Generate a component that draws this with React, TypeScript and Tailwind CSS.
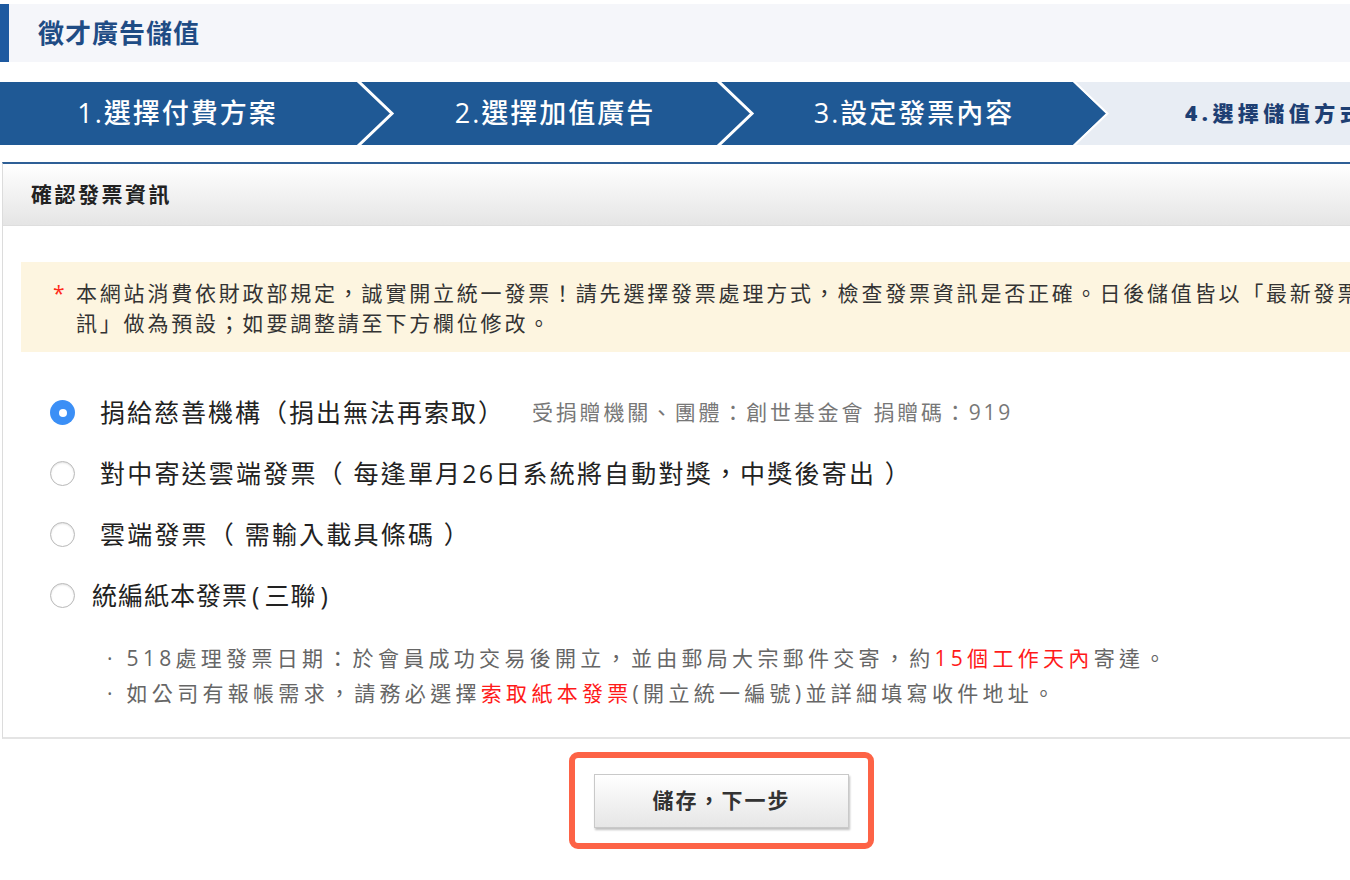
import React from "react";

const BLUE = "#1f5995";

function Chevron() {
  return (
    <svg width="40" height="63" viewBox="0 0 40 63" className="block shrink-0">
      <rect width="40" height="63" fill={BLUE} />
      <polyline points="2,-2 37,31.5 2,65" fill="none" stroke="#ffffff" strokeWidth="3" />
    </svg>
  );
}

function ArrowEnd() {
  return (
    <svg width="37" height="63" viewBox="0 0 37 63" className="block shrink-0">
      <rect width="37" height="63" fill="#e8edf4" />
      <polygon points="0,0 33,31.5 0,63" fill={BLUE} />
      <polyline points="0.5,-1 34.5,31.5 0.5,64" fill="none" stroke="#ffffff" strokeWidth="2" />
    </svg>
  );
}

function Radio({ checked }: { checked?: boolean }) {
  if (checked) {
    return (
      <span className="w-[25px] h-[25px] rounded-full bg-[#3b8ff6] flex items-center justify-center shrink-0">
        <span className="w-[8px] h-[8px] rounded-full bg-white" />
      </span>
    );
  }
  return (
    <span className="w-[25px] h-[25px] rounded-full bg-white border border-[#b9b9b9] shadow-[inset_0_1px_2px_rgba(0,0,0,0.12)] shrink-0" />
  );
}

export default function App() {
  return (
    <div className="w-[1350px] h-[880px] overflow-hidden bg-white font-['Open_Sans','Noto_Sans_CJK_TC',sans-serif] text-[#222]">
      {/* 標題 */}
      <div className="pt-[4px]">
        <div className="h-[58px] bg-[#f5f6fa] border-l-[9px] border-[#1e5aa0] flex items-center pl-[29px]">
          <h1 className="text-[26px] leading-none font-semibold tracking-[1px] text-[#1f4c85]">
            徵才廣告儲值
          </h1>
        </div>
      </div>

      {/* 步驟 */}
      <div className="mt-[20px] h-[63px] flex whitespace-nowrap">
        <div className="w-[355px] shrink-0 bg-[#1f5995] flex items-center justify-center text-white text-[27px] tracking-[2px] font-medium">
          1.選擇付費方案
        </div>
        <Chevron />
        <div className="w-[320px] shrink-0 bg-[#1f5995] flex items-center justify-center text-white text-[27px] tracking-[2px] font-medium">
          2.選擇加值廣告
        </div>
        <Chevron />
        <div className="w-[318px] shrink-0 bg-[#1f5995] flex items-center justify-center text-white text-[27px] tracking-[2px] font-medium">
          3.設定發票內容
        </div>
        <ArrowEnd />
        <div className="flex-1 bg-[#e8edf4] flex items-center pl-[75px] text-[21px] font-black tracking-[4.5px] text-[#1e3f73]">
          4.選擇儲值方式
        </div>
      </div>

      {/* 發票面板 */}
      <div className="mt-[17px] ml-[2px] border-t-2 border-t-[#2e5f96] border-l border-l-[#dcdcdc] border-b-2 border-b-[#e4e4e4]">
        <div className="h-[62px] bg-gradient-to-b from-white to-[#e5e5e5] border-b border-[#dedede] flex items-center pl-[28px]">
          <h2 className="text-[21px] font-bold tracking-[2.5px] text-[#222]">確認發票資訊</h2>
        </div>

        <div className="pl-[18px] pt-[36px] pb-[26px]">
          <div className="bg-[#fdf5e0] pt-[16px] pb-[14px] pl-[32px] flex text-[21px] leading-[30px] tracking-[2.8px] text-[#333] whitespace-nowrap">
            <span className="text-[#ff2a1a] w-[23px] shrink-0">*</span>
            <p>
              本網站消費依財政部規定，誠實開立統一發票！請先選擇發票處理方式，檢查發票資訊是否正確。日後儲值皆以「最新發票資
              <br />
              訊」做為預設；如要調整請至下方欄位修改。
            </p>
          </div>

          <div className="mt-[30px] pl-[29px] whitespace-nowrap">
            <div className="h-[61px] flex items-center">
              <Radio checked />
              <span className="ml-[25px] text-[25px] tracking-[2px]">捐給慈善機構（捐出無法再索取）</span>
              <span className="ml-[27px] text-[21px] tracking-[2.8px] text-[#777]">
                受捐贈機關、團體：創世基金會 捐贈碼：919
              </span>
            </div>
            <div className="h-[61px] flex items-center">
              <Radio />
              <span className="ml-[25px] text-[25px] tracking-[2.2px]">
                對中寄送雲端發票（ 每逢單月26日系統將自動對獎，中獎後寄出 ）
              </span>
            </div>
            <div className="h-[61px] flex items-center">
              <Radio />
              <span className="ml-[25px] text-[25px] tracking-[2.2px]">雲端發票（ 需輸入載具條碼 ）</span>
            </div>
            <div className="h-[61px] flex items-center">
              <Radio />
              <span className="ml-[17px] text-[25px] tracking-[1px]">
                統編紙本發票<span className="mx-[4px]">(</span>三聯<span className="mx-[4px]">)</span>
              </span>
            </div>
          </div>

          <div className="mt-[15px] pl-[86px] text-[21px] leading-[35px] tracking-[4.3px] text-[#666] whitespace-nowrap">
            <p>
              · 518處理發票日期：於會員成功交易後開立，並由郵局大宗郵件交寄，約
              <span className="text-[#ff1a1a]">15個工作天內</span>寄達。
            </p>
            <p>
              · 如公司有報帳需求，請務必選擇<span className="text-[#ff1a1a]">索取紙本發票</span>
              (開立統一編號)並詳細填寫收件地址。
            </p>
          </div>
        </div>
      </div>

      {/* 按鈕 */}
      <div className="mt-[13px] ml-[569px] w-[305px] h-[97px] border-[6px] border-[#fd6346] rounded-[9px] flex items-center justify-center">
        <button className="w-[255px] h-[54px] border border-[#c9c9c9] bg-gradient-to-b from-white to-[#e6e6e6] shadow-[1px_2px_2px_rgba(0,0,0,0.25)] text-[21px] font-bold tracking-[2px] text-[#333]">
          儲存，下一步
        </button>
      </div>
    </div>
  );
}
